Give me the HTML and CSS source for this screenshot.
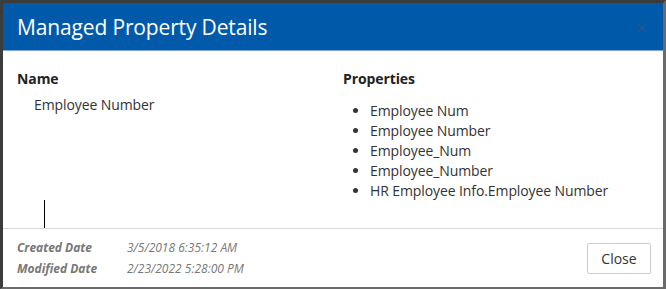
FILE: index.html
```html
<!DOCTYPE html>
<html lang="en">
<head>
  <meta charset="UTF-8">
  <title>Managed Property Details</title>
  <link rel="stylesheet" href="styles.css">
</head>
<body>
  <div class="dialog">
    <div class="dialog-header">
      <h1>Managed Property Details</h1>
      <span class="close-x">&times;</span>
    </div>
    <div class="dialog-body">
      <div class="col col-name">
        <h2>Name</h2>
        <p class="name-value">Employee Number</p>
      </div>
      <div class="col col-props">
        <h2>Properties</h2>
        <ul>
          <li>Employee Num</li>
          <li>Employee Number</li>
          <li>Employee_Num</li>
          <li>Employee_Number</li>
          <li>HR Employee Info.Employee Number</li>
        </ul>
      </div>
      <span class="cursor"></span>
    </div>
    <div class="dialog-footer">
      <div class="dates">
        <div class="date-row"><span class="date-label">Created Date</span><span class="date-value">3/5/2018 6:35:12 AM</span></div>
        <div class="date-row"><span class="date-label">Modified Date</span><span class="date-value">2/23/2022 5:28:00 PM</span></div>
      </div>
      <button class="btn">Close</button>
    </div>
  </div>
</body>
</html>
```

FILE: styles.css
```css
body {
  margin: 0;
  font-family: 'Open Sans', 'Noto Sans', sans-serif;
  background-color: #fff;
}
.dialog {
  width: 660px;
  height: 284px;
  border-top: 3px solid #3c3c3c;
  border-left: 3px solid #3c3c3c;
  border-right: 3px solid #6a6a6a;
  border-bottom: 2px solid #6a6a6a;
  display: flex;
  flex-direction: column;
  box-sizing: content-box;
}
.dialog-header {
  background-color: #005aa9;
  height: 47px;
  border-bottom: 1px solid #7fa8d4;
  display: flex;
  align-items: center;
  justify-content: space-between;
  padding: 0 16px 0 14px;
}
.dialog-header h1 {
  margin: 0;
  color: #fff;
  font-size: 21px;
  font-weight: 400;
  letter-spacing: -0.15px;
}
.close-x {
  color: #24558c;
  font-size: 20px;
  line-height: 1;
  margin-top: 2px;
}
.dialog-body {
  position: relative;
  flex: 1;
  display: flex;
  padding: 18px 14px 0;
  border-bottom: 1px solid #dcdcdc;
  letter-spacing: -0.1px;
}
.col h2 {
  margin: 0;
  font-size: 14px;
  font-weight: 700;
  color: #222;
  line-height: 20px;
}
.col-name {
  width: 326px;
}
.name-value {
  margin: 6px 0 0 17px;
  font-size: 14px;
  color: #333;
  line-height: 20px;
}
.col-props ul {
  margin: 12px 0 0;
  padding-left: 27px;
  font-size: 14px;
  color: #333;
  line-height: 20px;
}
.cursor {
  position: absolute;
  left: 41px;
  bottom: 0;
  width: 1px;
  height: 28px;
  background-color: #000;
}
.dialog-footer {
  height: 58px;
  display: flex;
  align-items: center;
  justify-content: space-between;
  padding: 0 12px 0 14px;
}
.date-row {
  font-size: 12px;
  font-style: italic;
  color: #777;
  line-height: 21px;
}
.date-label {
  display: inline-block;
  width: 110px;
  font-weight: 700;
}
.btn {
  font-family: inherit;
  font-size: 14px;
  color: #333;
  background-color: #fff;
  border: 1px solid #ccc;
  border-radius: 2px;
  width: 64px;
  height: 31px;
  padding: 0;
}
```
